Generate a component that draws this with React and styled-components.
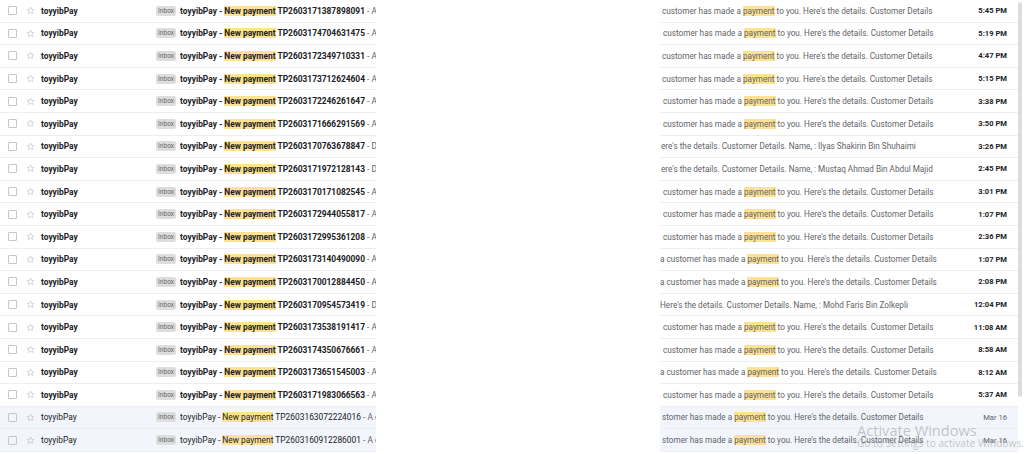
import React from 'react';
import styled, { createGlobalStyle } from 'styled-components';

const GlobalStyle = createGlobalStyle`
  html, body {
    margin: 0;
    padding: 0;
    background: #ffffff;
  }
  body {
    font-family: Roboto, "Liberation Sans", Arial, sans-serif;
    overflow: hidden;
  }
`;

const Page = styled.div`
  position: relative;
  display: flex;
  width: 1024px;
  height: 454px;
  overflow: hidden;
  background: #ffffff;
`;

const Pane = styled.div`
  display: flex;
  flex-direction: column;
  width: ${(p) => p.width}px;
  flex-shrink: 0;
  overflow: hidden;
`;

const Gap = styled.div`
  flex: 1;
`;

const Row = styled.div`
  display: flex;
  align-items: center;
  height: 22.6px;
  flex-shrink: 0;
  box-sizing: border-box;
  border-bottom: 1px solid #eceff1;
  background: ${(p) => (p.read ? '#f2f6fc' : '#ffffff')};
  font-size: 8.4px;
  color: #202124;
  font-weight: ${(p) => (p.read ? 400 : 700)};
  white-space: nowrap;
`;

const Check = styled.span`
  width: 7px;
  height: 7px;
  margin-left: 8px;
  border: 1px solid #c4c7c5;
  border-radius: 1px;
  flex-shrink: 0;
`;

const Star = styled.svg`
  width: 9px;
  height: 9px;
  margin-left: 9px;
  flex-shrink: 0;
`;

const Sender = styled.span`
  width: 115px;
  margin-left: 6px;
  flex-shrink: 0;
`;

const Label = styled.span`
  flex-shrink: 0;
  background: #dddddd;
  color: #666666;
  font-size: 6.6px;
  font-weight: 400;
  padding: 1px 2px;
  border-radius: 2px;
  margin-right: 4px;
`;

const Subject = styled.span`
  overflow: hidden;
`;

const Snip = styled.span`
  color: #5f6368;
  font-weight: 400;
`;

const Mark = styled.span`
  background: #fde293;
`;

const RightText = styled.span`
  flex: 1;
  overflow: hidden;
  padding-left: ${(p) => p.offset}px;
  color: #5f6368;
  font-size: 8.2px;
  font-weight: 400;
`;

const Time = styled.span`
  width: 60px;
  flex-shrink: 0;
  text-align: right;
  padding-right: 11px;
  font-size: 7.6px;
  color: ${(p) => (p.read ? '#5f6368' : '#202124')};
`;

const Scrollbar = styled.div`
  width: 6px;
  flex-shrink: 0;
  display: flex;
  flex-direction: column;
  padding-top: 2px;
`;

const Thumb = styled.div`
  width: 4px;
  height: 395px;
  background: #dadce0;
  border-radius: 2px;
`;

const Watermark = styled.div`
  position: absolute;
  left: 857px;
  top: 423px;
  color: rgba(130, 130, 130, 0.45);
  font-family: "Open Sans", "DejaVu Sans", sans-serif;
  line-height: 1;
  white-space: nowrap;
  pointer-events: none;
`;

const WatermarkTitle = styled.div`
  font-size: 14.6px;
`;

const WatermarkSub = styled.div`
  font-size: 10.2px;
`;

const withPayment = (text) => {
  const parts = text.split('payment');
  return parts.map((part, i) => (
    <React.Fragment key={i}>
      {part}
      {i < parts.length - 1 && <Mark>payment</Mark>}
    </React.Fragment>
  ));
};

const FULL = 'customer has made a payment to you. Here\'s the details. Customer Details';

const rows = [
  { id: 'TP2603171387898091', lead: 'A ', right: FULL, off: 2, time: '5:45 PM' },
  { id: 'TP2603174704631475', lead: 'A ', right: FULL, off: 3, time: '5:19 PM' },
  { id: 'TP2603172349710331', lead: 'A ', right: FULL, off: 2, time: '4:47 PM' },
  { id: 'TP2603173712624604', lead: 'A ', right: FULL, off: 2, time: '5:15 PM' },
  { id: 'TP2603172246261647', lead: 'A ', right: FULL, off: 3, time: '3:38 PM' },
  { id: 'TP2603171666291569', lead: 'A ', right: FULL, off: 3, time: '3:50 PM' },
  { id: 'TP2603170763678847', lead: 'Dear Merchant. ', right: 'ere\'s the details. Customer Details. Name, : Ilyas Shakirin Bin Shuhaimi', off: 1, time: '3:26 PM' },
  { id: 'TP2603171972128143', lead: 'Dear Merchant. ', right: 'ere\'s the details. Customer Details. Name, : Mustaq Ahmad Bin Abdul Majid', off: 1, time: '2:45 PM' },
  { id: 'TP2603170171082545', lead: 'A ', right: FULL, off: 3, time: '3:01 PM' },
  { id: 'TP2603172944055817', lead: 'A ', right: FULL, off: 3, time: '1:07 PM' },
  { id: 'TP2603172995361208', lead: 'A ', right: FULL, off: 3, time: '2:36 PM' },
  { id: 'TP2603173140490090', lead: 'A ', right: 'a ' + FULL, off: 0, time: '1:07 PM' },
  { id: 'TP2603170012884450', lead: 'A ', right: 'a ' + FULL, off: 0, time: '2:08 PM' },
  { id: 'TP2603170954573419', lead: 'Dear Merchant. ', right: 'Here\'s the details. Customer Details. Name, : Mohd Faris Bin Zolkepli', off: 0, time: '12:04 PM' },
  { id: 'TP2603173538191417', lead: 'A c', right: FULL, off: 3, time: '11:08 AM' },
  { id: 'TP2603174350676661', lead: 'A ', right: FULL, off: 3, time: '8:58 AM' },
  { id: 'TP2603173651545003', lead: 'A ', right: 'a ' + FULL, off: 0, time: '8:12 AM' },
  { id: 'TP2603171983066563', lead: 'A ', right: FULL, off: 3, time: '5:37 AM' },
  { id: 'TP2603163072224016', lead: 'A cus', right: 'stomer has made a payment to you. Here\'s the details. Customer Details', off: 2, time: 'Mar 16', read: true },
  { id: 'TP2603160912286001', lead: 'A cu', right: 'stomer has made a payment to you. Here\'s the details. Customer Details', off: 2, time: 'Mar 16', read: true },
];

const StarIcon = () => (
  <Star viewBox="0 0 24 24">
    <path
      d="M12 2.8l2.7 6 6.5.6-4.9 4.3 1.5 6.4L12 16.8l-5.8 3.3 1.5-6.4-4.9-4.3 6.5-.6z"
      fill="none"
      stroke="#b8bcc0"
      strokeWidth="1.6"
      strokeLinejoin="round"
    />
  </Star>
);

const App = () => (
  <Page>
    <GlobalStyle />
    <Pane width={376}>
      {rows.map((r) => (
        <Row key={r.id} read={r.read}>
          <Check />
          <StarIcon />
          <Sender>toyyibPay</Sender>
          <Label>Inbox</Label>
          <Subject>
            toyyibPay - <Mark>New payment</Mark> {r.id} <Snip>- {r.lead}customer has made a payment to you.</Snip>
          </Subject>
        </Row>
      ))}
    </Pane>
    <Gap />
    <Pane width={358}>
      {rows.map((r) => (
        <Row key={r.id} read={r.read}>
          <RightText offset={r.off}>{withPayment(r.right)}</RightText>
          <Time read={r.read}>{r.time}</Time>
        </Row>
      ))}
    </Pane>
    <Scrollbar>
      <Thumb />
    </Scrollbar>
    <Watermark>
      <WatermarkTitle>Activate Windows</WatermarkTitle>
      <WatermarkSub>Go to Settings to activate Windows.</WatermarkSub>
    </Watermark>
  </Page>
);

export default App;
